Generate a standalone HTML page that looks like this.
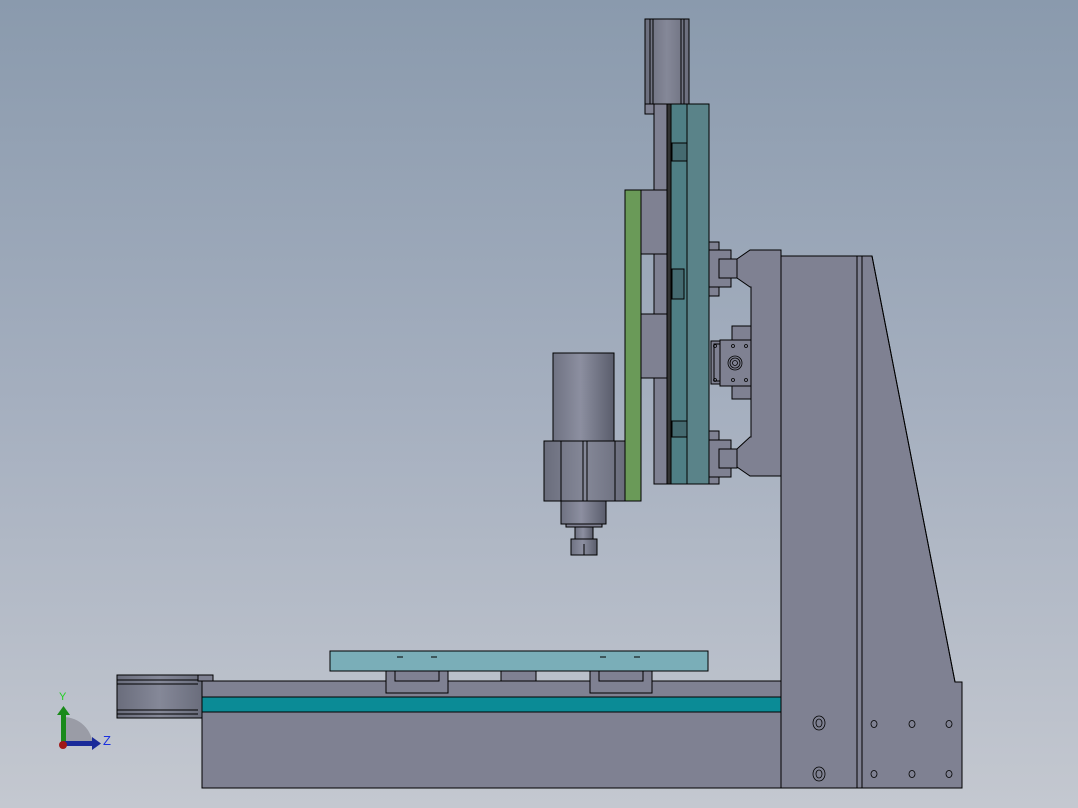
<!DOCTYPE html>
<html><head><meta charset="utf-8"><style>
html,body{margin:0;padding:0;width:1078px;height:808px;overflow:hidden}
body{background:linear-gradient(#8a9aad,#a5afbf 50%,#c4c8d0)}
svg{position:absolute;left:0;top:0}
</style></head><body>
<svg width="1078" height="808" viewBox="0 0 1078 808" xmlns="http://www.w3.org/2000/svg" stroke="#000" stroke-width="1" fill="#7f8192">
<defs>
<linearGradient id="cyl" x1="0" x2="1"><stop offset="0" stop-color="#6f7282"/><stop offset="0.45" stop-color="#8c8fa0"/><stop offset="1" stop-color="#5a5d6c"/></linearGradient>
<linearGradient id="mot" x1="0" x2="1"><stop offset="0" stop-color="#6a6d7c"/><stop offset="0.5" stop-color="#858898"/><stop offset="1" stop-color="#6a6d7c"/></linearGradient>
</defs>
<!-- column -->
<polygon points="781,256 872,256 955,682 962,682 962,788 781,788"/>
<line x1="857" y1="256" x2="857" y2="788"/><line x1="862" y1="256" x2="862" y2="788"/>
<line x1="872" y1="256" x2="955" y2="682"/>
<!-- holes -->
<g fill="none" stroke-width="0.8">
<ellipse cx="819" cy="723" rx="6" ry="7"/><ellipse cx="819" cy="723" rx="3" ry="4"/>
<ellipse cx="819" cy="774" rx="6" ry="7"/><ellipse cx="819" cy="774" rx="3" ry="4"/>
<ellipse cx="874" cy="724" rx="3" ry="3.5"/><ellipse cx="912" cy="724" rx="3" ry="3.5"/><ellipse cx="949" cy="724" rx="3" ry="3.5"/>
<ellipse cx="874" cy="774" rx="3" ry="3.5"/><ellipse cx="912" cy="774" rx="3" ry="3.5"/><ellipse cx="949" cy="774" rx="3" ry="3.5"/>
</g>
<!-- base -->
<rect x="202" y="681" width="579" height="107"/>
<rect x="202" y="697" width="579" height="15" fill="#0b8b96"/>
<!-- Z motor -->
<rect x="117" y="675" width="85" height="43" fill="url(#mot)"/>
<line x1="117" y1="680" x2="198" y2="680"/><line x1="117" y1="684" x2="198" y2="684"/>
<line x1="117" y1="710" x2="198" y2="710"/><line x1="117" y1="714" x2="198" y2="714"/>
<rect x="198" y="675" width="15" height="6"/>
<!-- table blocks -->
<rect x="386" y="671" width="62" height="22"/><rect x="395" y="671" width="44" height="10"/>
<rect x="590" y="671" width="62" height="22"/><rect x="599" y="671" width="44" height="10"/>
<rect x="501" y="671" width="35" height="10"/>
<rect x="330" y="651" width="378" height="20" fill="#7aaeb8"/>
<g stroke-width="1"><line x1="397" y1="657" x2="403" y2="657"/><line x1="431" y1="657" x2="437" y2="657"/><line x1="600" y1="657" x2="606" y2="657"/><line x1="634" y1="657" x2="640" y2="657"/></g>
<!-- right bracket -->
<polygon points="737,259 750,250 781,250 781,476 750,476 737,467 737,449 750,437 751,437 751,287 750,287 737,278"/>
<!-- bearing block -->
<rect x="732" y="326" width="19" height="73"/>
<rect x="711" y="341" width="12" height="43"/>
<rect x="714" y="344" width="10" height="37"/>
<rect x="720" y="340" width="31" height="46"/>
<g fill="none" stroke-width="0.8"><circle cx="735" cy="363" r="7"/><circle cx="735" cy="363" r="5"/><circle cx="735" cy="363" r="2.5"/>
<circle cx="733" cy="346" r="1.5"/><circle cx="746" cy="346" r="1.5"/><circle cx="733" cy="380" r="1.5"/><circle cx="746" cy="380" r="1.5"/><circle cx="715" cy="346" r="1.5"/><circle cx="715" cy="380" r="1.5"/></g>
<!-- rail blocks -->
<rect x="709" y="242" width="10" height="54"/><rect x="709" y="250" width="22" height="37"/><rect x="719" y="259" width="18" height="19"/>
<rect x="709" y="431" width="10" height="53"/><rect x="709" y="440" width="22" height="37"/><rect x="719" y="449" width="18" height="19"/>
<!-- vertical Z motor -->
<rect x="645" y="19" width="44" height="85" fill="url(#mot)"/>
<line x1="650" y1="19" x2="650" y2="104"/><line x1="653" y1="19" x2="653" y2="104"/>
<line x1="681" y1="19" x2="681" y2="104"/><line x1="684" y1="19" x2="684" y2="104"/>
<rect x="645" y="104" width="11" height="10"/>
<!-- back plate -->
<rect x="654" y="104" width="13" height="380"/>
<rect x="667" y="104" width="4" height="380" fill="#333"/>
<rect x="671" y="104" width="16" height="380" fill="#4f7f85"/>
<rect x="687" y="104" width="22" height="380" fill="#5a8389"/>
<rect x="672" y="143" width="15" height="18" fill="#456a70"/>
<rect x="672" y="269" width="12" height="30" fill="#456a70"/>
<rect x="672" y="421" width="15" height="16" fill="#456a70"/>
<!-- green plate & blocks -->
<rect x="641" y="190" width="26" height="64"/>
<rect x="641" y="314" width="26" height="64"/>
<rect x="625" y="190" width="16" height="311" fill="#6a9a58"/>
<!-- spindle -->
<rect x="553" y="353" width="61" height="88" fill="url(#cyl)"/>
<rect x="544" y="441" width="81" height="60" fill="url(#mot)"/>
<line x1="561" y1="441" x2="561" y2="501"/><line x1="583" y1="441" x2="583" y2="501"/><line x1="587" y1="441" x2="587" y2="501"/><line x1="615" y1="441" x2="615" y2="501"/>
<rect x="561" y="501" width="45" height="23" fill="url(#cyl)"/>
<rect x="566" y="524" width="36" height="3"/>
<rect x="575" y="527" width="18" height="12" fill="url(#cyl)"/>
<rect x="571" y="539" width="26" height="16" fill="url(#cyl)"/>
<line x1="584" y1="544" x2="584" y2="555"/>
<!-- triad -->
<path d="M63 746 L63 717 A30 30 0 0 1 93 746 Z" fill="#9a9ca6" stroke="none"/>
<rect x="61" y="713" width="5" height="33" fill="#1a8a1a" stroke="none"/>
<polygon points="57,715 63.5,706 70,715" fill="#1a8a1a" stroke="none"/>
<rect x="63" y="741" width="30" height="5" fill="#1a2a9a" stroke="none"/>
<polygon points="92,737 101,743.5 92,750" fill="#1a2a9a" stroke="none"/>
<circle cx="63" cy="745" r="4" fill="#a01818" stroke="none"/>
<text x="59" y="700" font-family="Liberation Sans, sans-serif" font-size="11" fill="#20d020" stroke="none">Y</text>
<text x="103" y="745" font-family="Liberation Sans, sans-serif" font-size="13" fill="#1a30e0" stroke="none">Z</text>
</svg>
</body></html>
